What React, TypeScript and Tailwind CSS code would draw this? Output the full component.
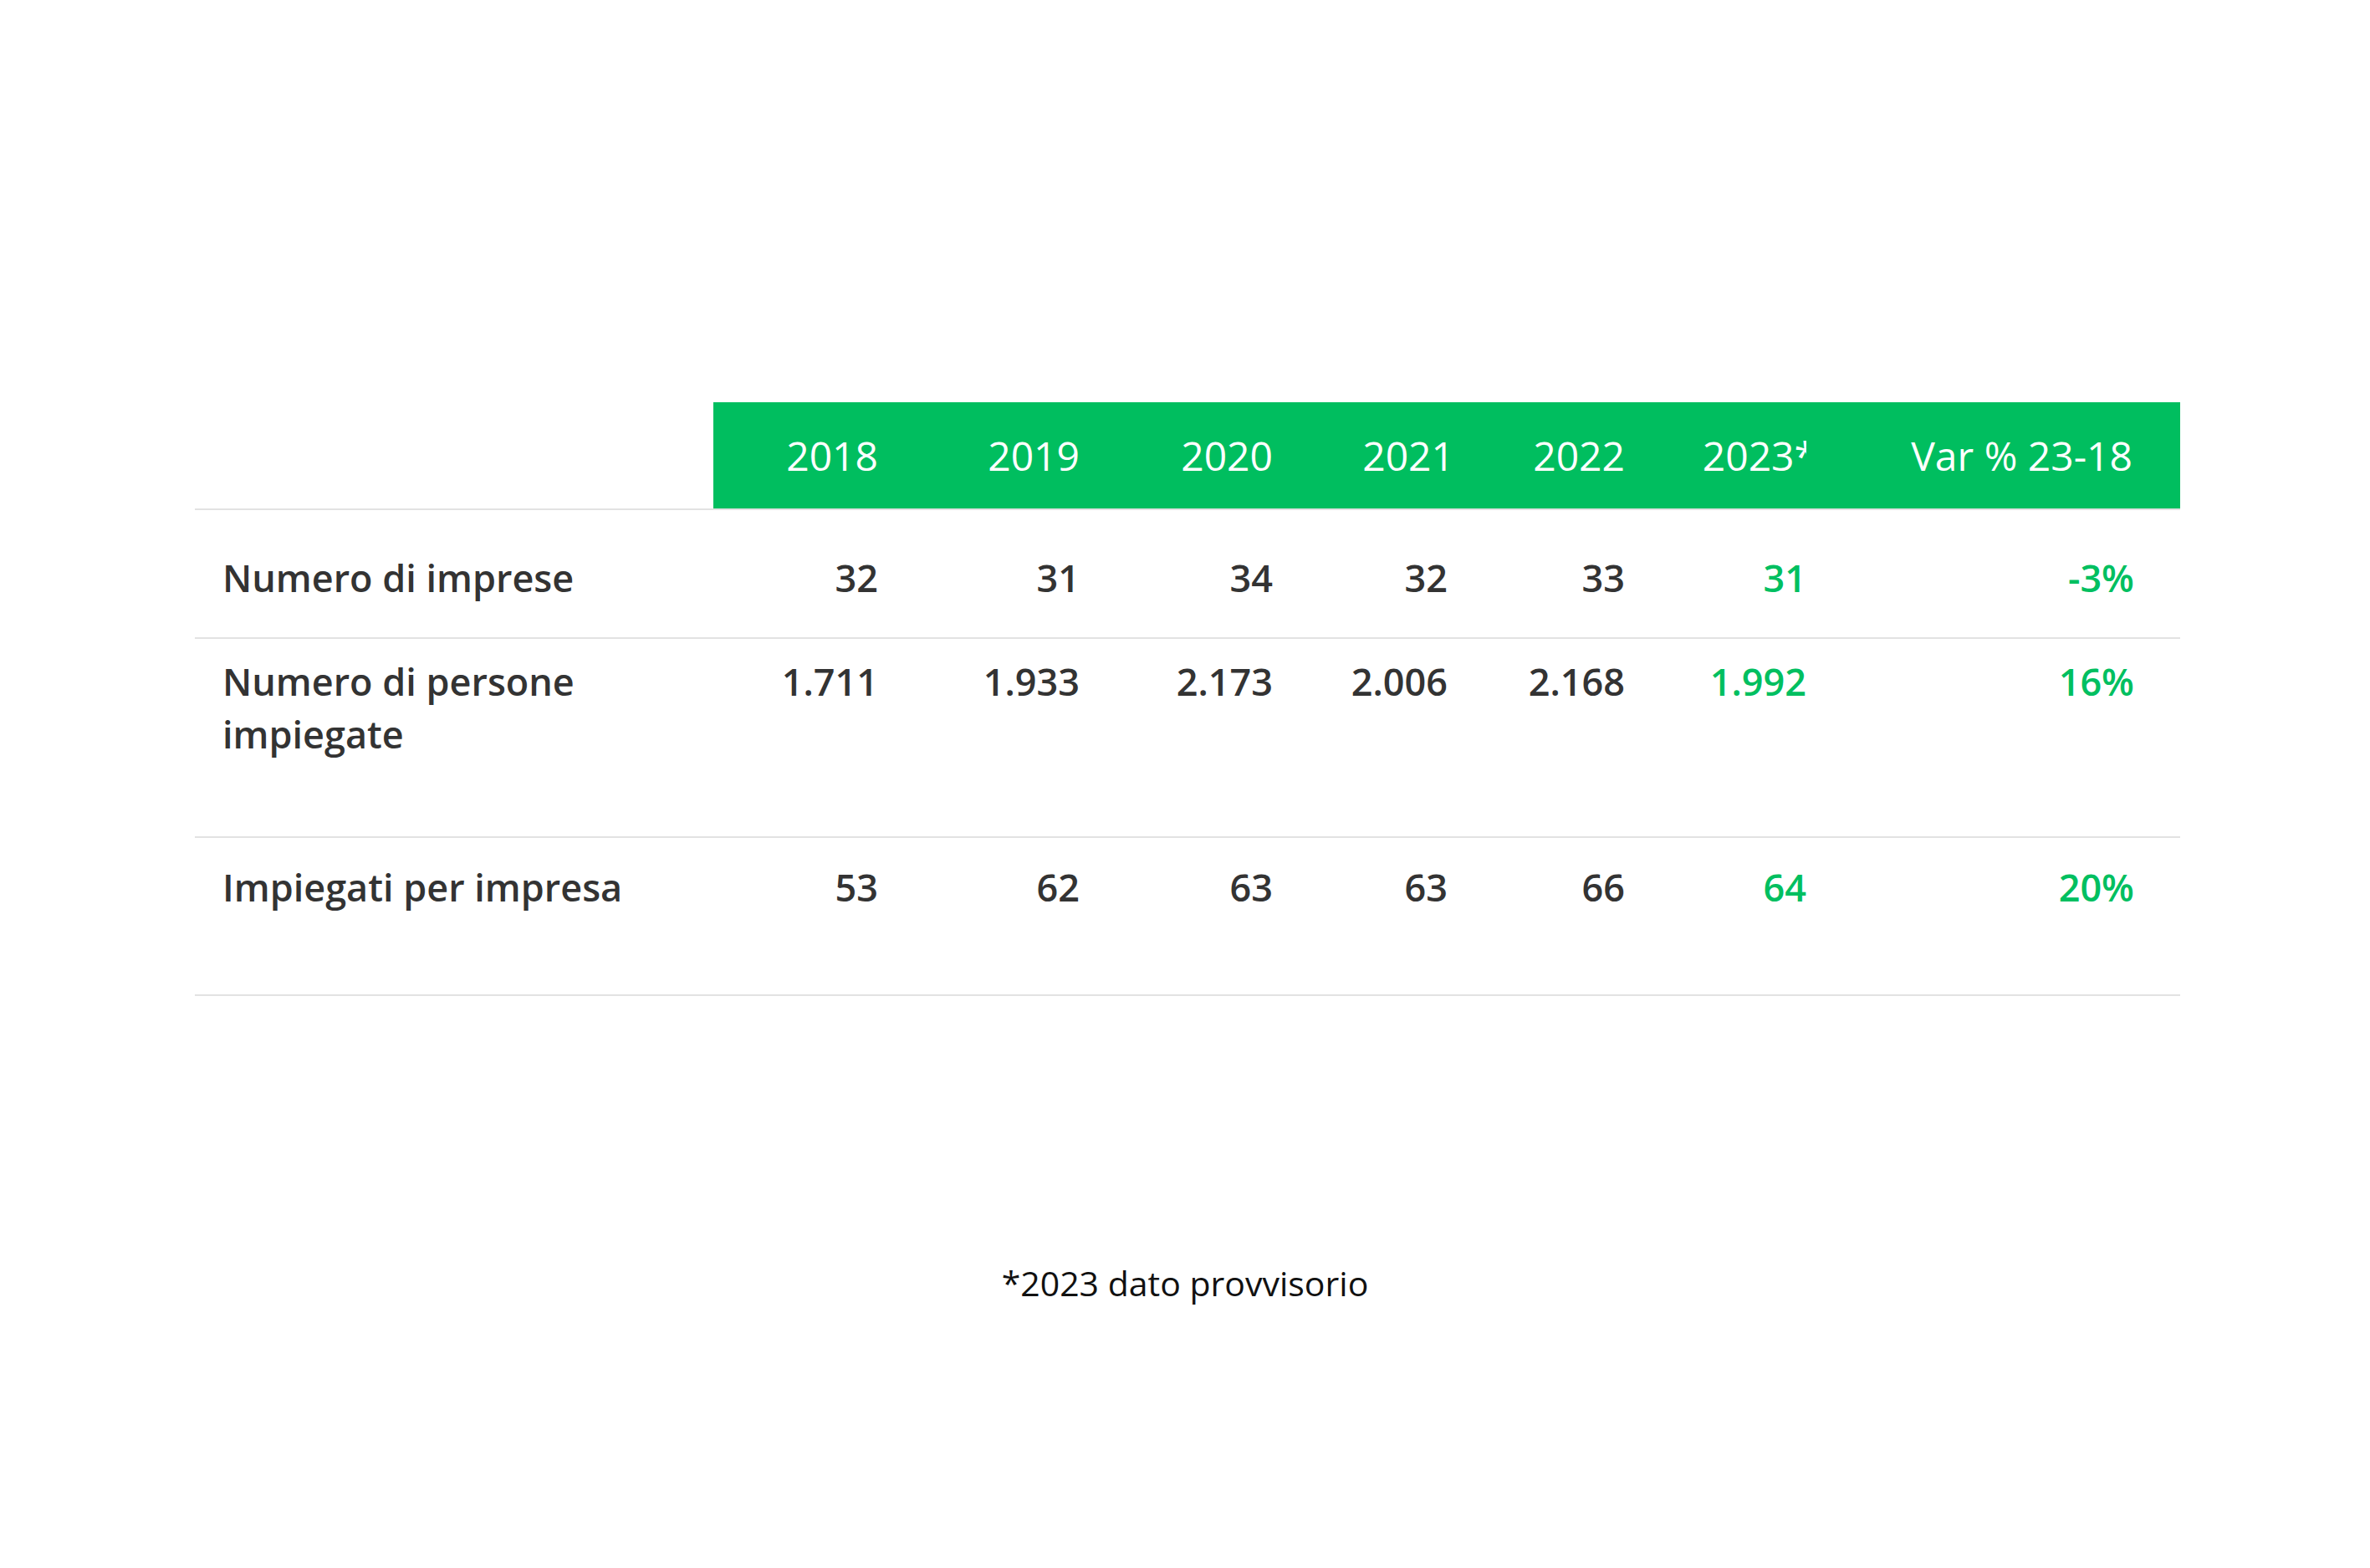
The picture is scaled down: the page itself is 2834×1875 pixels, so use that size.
import React from 'react';

type Row = {
  label: string[];
  values: string[];
  change: string;
  height: string;
  padTop: string;
};

// the header labels don't line up exactly with the figures below
const YEARS = [
  { y: '2018', shift: '' },
  { y: '2019', shift: '' },
  { y: '2020', shift: '' },
  { y: '2021', shift: '-mr-[8px]' },
  { y: '2022', shift: '' },
  { y: '2023*', shift: '-mr-[12px]' },
];

const ROWS: Row[] = [
  { label: ['Numero di imprese'], values: ['32', '31', '34', '32', '33', '31'], change: '-3%', height: 'h-[154px]', padTop: 'pt-[49px]' },
  { label: ['Numero di persone', 'impiegate'], values: ['1.711', '1.933', '2.173', '2.006', '2.168', '1.992'], change: '16%', height: 'h-[238px]', padTop: 'pt-[19px]' },
  { label: ['Impiegati per impresa'], values: ['53', '62', '63', '63', '66', '64'], change: '20%', height: 'h-[191px]', padTop: 'pt-[27px]' },
];

const GRID = 'grid grid-cols-[620px_197px_241px_231px_209px_212px_217px_447px]';

const App: React.FC = () => {
  return (
    <div className="w-[2834px] h-[1875px] bg-white pt-[481px] font-['Open_Sans',sans-serif]">
      <div className="ml-[233px] w-[2374px]">
        {/* header */}
        <div className={`${GRID} h-[127px]`}>
          <div />
          {YEARS.map(({ y, shift }) => (
            <div key={y} className="bg-[#00be5f] flex items-center justify-end text-white text-[48px] leading-[63px]">
              <span className={shift}>{y}</span>
            </div>
          ))}
          <div className="bg-[#00be5f] flex items-center justify-end pr-[57px] text-white text-[48px] leading-[63px]">
            Var % 23-18
          </div>
        </div>

        {ROWS.map((row, i) => (
          <div
            key={i}
            className={`${GRID} ${row.height} ${row.padTop} border-t-2 border-[#e2e2e2] ${i === ROWS.length - 1 ? 'border-b-2' : ''} items-start text-[45px] leading-[63px] font-semibold`}
          >
            <div className="pl-[33px] text-[#333333]">
              {row.label.map((l) => (
                <div key={l}>{l}</div>
              ))}
            </div>
            {row.values.map((v, j) => (
              <div key={j} className={`text-right ${j === 5 ? 'text-[#00bf60]' : 'text-[#333333]'}`}>
                {v}
              </div>
            ))}
            <div className="text-right pr-[55px] text-[#00bf60]">{row.change}</div>
          </div>
        ))}
      </div>

      <div className="mt-[313px] text-center text-[41px] leading-[60px] text-[#111111]">*2023 dato provvisorio</div>
    </div>
  );
};

export default App;
